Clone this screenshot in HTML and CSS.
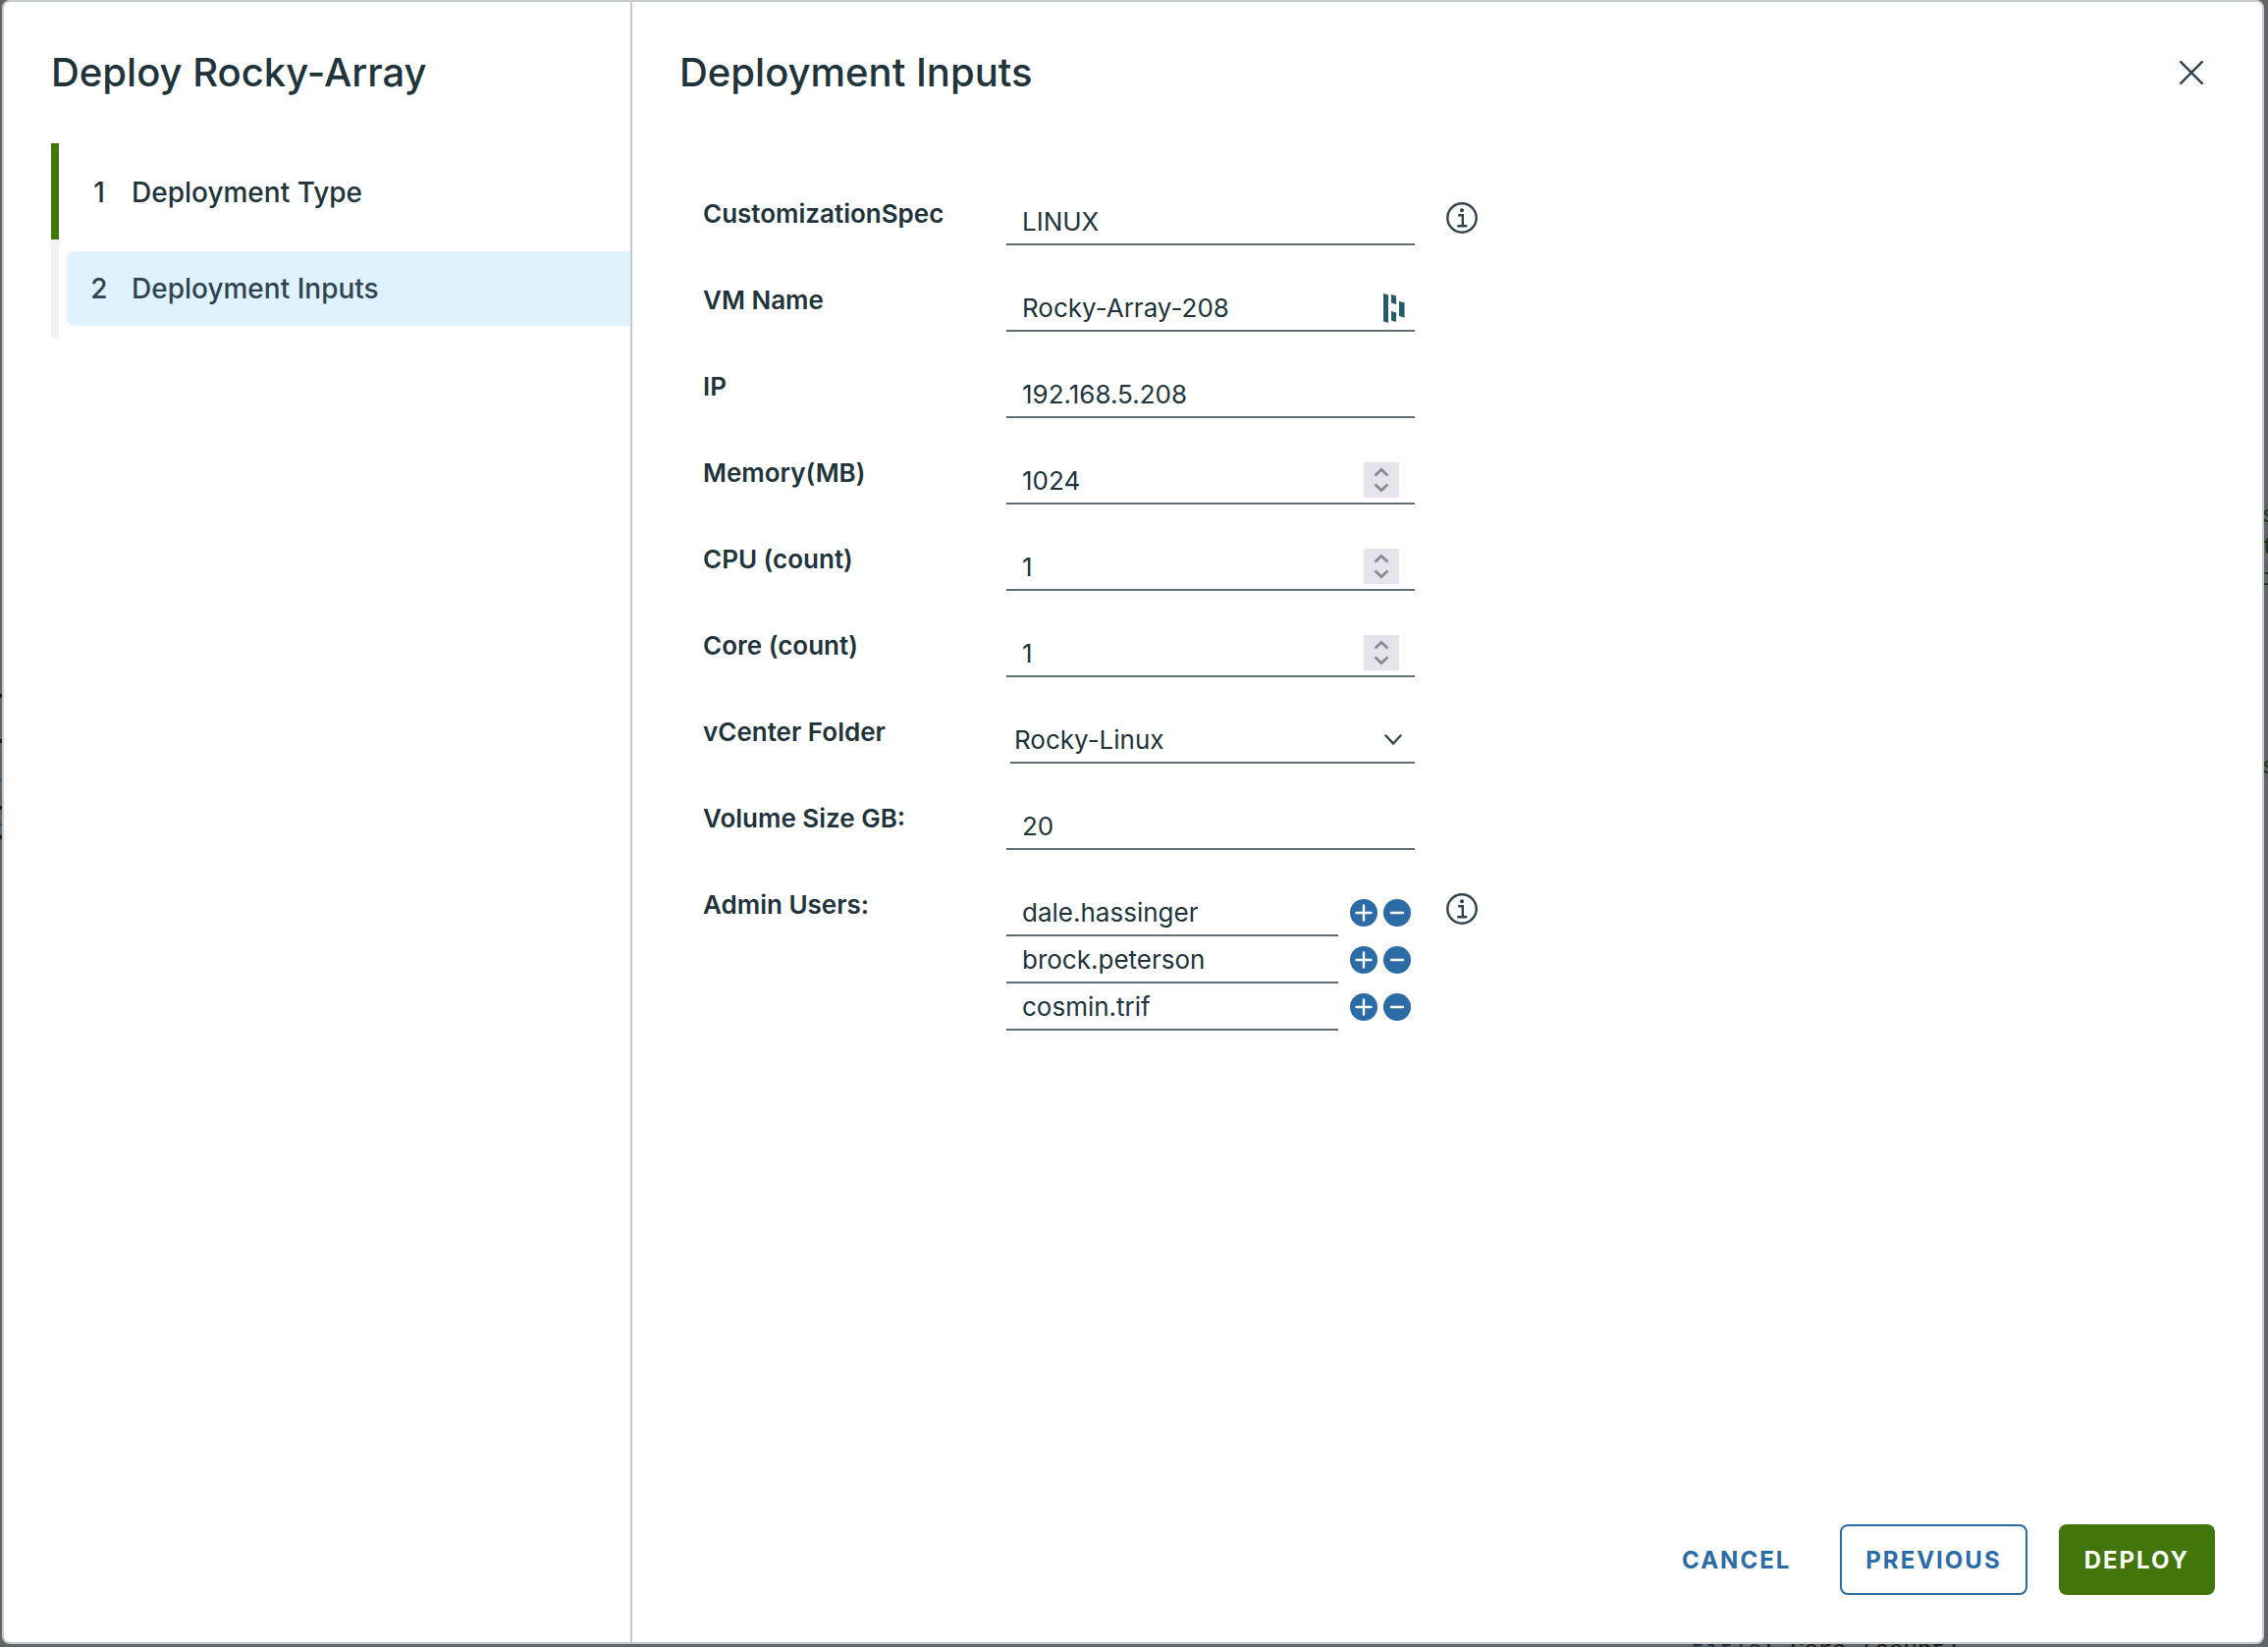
FILE: index.html
```
<!DOCTYPE html>
<html lang="en">
<head>
<meta charset="utf-8">
<title>Deploy Rocky-Array</title>
<link rel="stylesheet" href="styles.css">
</head>
<body>
<svg class="sprite" aria-hidden="true">
  <symbol id="info" viewBox="0 0 32 32">
    <circle cx="16" cy="16" r="14.7" fill="none" stroke="currentColor" stroke-width="2.4"/>
    <circle cx="16" cy="8.2" r="2" fill="currentColor"/>
    <path d="M12.2 13.2h4.6v11M11.2 24.3h10" fill="none" stroke="currentColor" stroke-width="2.4"/>
  </symbol>
  <symbol id="plus" viewBox="0 0 28 28">
    <circle cx="14" cy="14" r="14" fill="currentColor"/>
    <path d="M14 6.500v15M6.500 14h15" stroke="#fff" stroke-width="2.4" stroke-linecap="round"/>
  </symbol>
  <symbol id="minus" viewBox="0 0 28 28">
    <circle cx="14" cy="14" r="14" fill="currentColor"/>
    <path d="M8 14h12" stroke="#fff" stroke-width="2.4" stroke-linecap="round"/>
  </symbol>
  <symbol id="updown" viewBox="0 0 36 36">
    <path d="M11.500 13.500L18 7.500l6.500 6M11.500 22.500l6.500 6 6.500-6" fill="none" stroke="currentColor" stroke-width="2.8"/>
  </symbol>
</svg>
<div class="backdrop" aria-hidden="true">
  <svg class="backdrop-edge" width="2" height="150" viewBox="0 0 2 150">
    <path d="M0 2h2M0 48h2M0 116h2M0 146h2" stroke="#1b1d20" stroke-width="4"/>
    <path d="M0 88h2M0 133h2" stroke="#2a4f70" stroke-width="2"/>
  </svg>
  <pre class="code code-right">s
t
i





s</pre>
  <pre class="code code-bottom"><span class="key">title</span>: Core (count)</pre>
</div>
<main class="dialog" role="dialog" aria-labelledby="dialog-title">
  <aside class="sidebar">
    <h1 class="title" id="dialog-title">Deploy Rocky-Array</h1>
    <nav class="steps">
      <a class="step done" href="#type"><span class="step-body"><span class="num">1</span>Deployment Type</span></a>
      <a class="step current" href="#inputs" aria-current="step"><span class="step-body"><span class="num">2</span>Deployment Inputs</span></a>
    </nav>
  </aside>
  <section class="content">
    <header class="header">
      <h2 class="title">Deployment Inputs</h2>
      <button class="icon-button close" type="button" aria-label="Close"><svg width="24" height="24" viewBox="0 0 24 24"><path d="M1.200 1.200l21.600 21.600M22.800 1.200L1.200 22.800" stroke="currentColor" stroke-width="2.400" stroke-linecap="round"/></svg></button>
    </header>
    <form class="form">
      <div class="row">
        <label for="spec">CustomizationSpec</label>
        <div class="field"><input id="spec" type="text" value="LINUX"></div>
        <button class="icon-button info" type="button" aria-label="About CustomizationSpec"><svg width="32" height="32"><use href="#info"/></svg></button>
      </div>
      <div class="row">
        <label for="vm">VM Name</label>
        <div class="field"><input id="vm" type="text" value="Rocky-Array-208"><svg class="vault" width="22" height="30" viewBox="0 0 22 30"><path d="M0 0l5 1.500v28.500l-5-1.500zM8 1l5 1.500v8.500l-5-1.500zM8 18l5 1.500v9.500l-5-1.500zM16 8l5.500 1.500v15l-5.500-1.500z" fill="#255a6b"/></svg></div>
      </div>
      <div class="row">
        <label for="ip">IP</label>
        <div class="field"><input id="ip" type="text" value="192.168.5.208"></div>
      </div>
      <div class="row">
        <label for="memory">Memory(MB)</label>
        <div class="field"><input id="memory" type="number" value="1024"><button class="stepper" type="button" aria-label="Adjust memory"><svg width="36" height="36"><use href="#updown"/></svg></button></div>
      </div>
      <div class="row">
        <label for="cpu">CPU (count)</label>
        <div class="field"><input id="cpu" type="number" value="1"><button class="stepper" type="button" aria-label="Adjust CPU count"><svg width="36" height="36"><use href="#updown"/></svg></button></div>
      </div>
      <div class="row">
        <label for="core">Core (count)</label>
        <div class="field"><input id="core" type="number" value="1"><button class="stepper" type="button" aria-label="Adjust core count"><svg width="36" height="36"><use href="#updown"/></svg></button></div>
      </div>
      <div class="row">
        <label for="folder">vCenter Folder</label>
        <div class="field select">
          <select id="folder"><option>Rocky-Linux</option></select>
          <svg class="chevron" width="18" height="12" viewBox="0 0 18 12"><path d="M1.500 1.500L9 9.500l7.500-8" fill="none" stroke="currentColor" stroke-width="2.400" stroke-linecap="round"/></svg>
        </div>
      </div>
      <div class="row">
        <label for="volume">Volume Size GB:</label>
        <div class="field"><input id="volume" type="text" value="20"></div>
      </div>
      <div class="row">
        <label for="user1">Admin Users:</label>
        <div class="users">
          <div class="user">
            <div class="field"><input id="user1" type="text" value="dale.hassinger"></div>
            <button class="icon-button" type="button" aria-label="Add user"><svg width="28" height="28"><use href="#plus"/></svg></button>
            <button class="icon-button" type="button" aria-label="Remove user"><svg width="28" height="28"><use href="#minus"/></svg></button>
          </div>
          <div class="user">
            <div class="field"><input type="text" aria-label="Admin user 2" value="brock.peterson"></div>
            <button class="icon-button" type="button" aria-label="Add user"><svg width="28" height="28"><use href="#plus"/></svg></button>
            <button class="icon-button" type="button" aria-label="Remove user"><svg width="28" height="28"><use href="#minus"/></svg></button>
          </div>
          <div class="user">
            <div class="field"><input type="text" aria-label="Admin user 3" value="cosmin.trif"></div>
            <button class="icon-button" type="button" aria-label="Add user"><svg width="28" height="28"><use href="#plus"/></svg></button>
            <button class="icon-button" type="button" aria-label="Remove user"><svg width="28" height="28"><use href="#minus"/></svg></button>
          </div>
        </div>
        <button class="icon-button info" type="button" aria-label="About Admin Users"><svg width="32" height="32"><use href="#info"/></svg></button>
      </div>
    </form>
    <footer class="footer">
      <button class="btn link" type="button">CANCEL</button>
      <button class="btn outline" type="button">PREVIOUS</button>
      <button class="btn primary" type="button">DEPLOY</button>
    </footer>
  </section>
</main>
</body>
</html>
```

FILE: styles.css
```
* {
  box-sizing: border-box;
}

body {
  position: relative;
  margin: 0;
  min-height: 100vh;
  padding: 0 4px 3px 2px;
  display: flex;
  background: #636466;
  color: #21333b;
  font-family: Inter, "Open Sans", sans-serif;
  font-size: 26px;
}

.sprite {
  display: none;
}

/* Dimmed page behind the dialog */
.backdrop {
  position: absolute;
  inset: 0;
  overflow: hidden;
}

.backdrop-edge {
  position: absolute;
  left: 0;
  top: 707px;
}

.code {
  position: absolute;
  margin: 0;
  color: #15181b;
  font: 24px/32px "Liberation Mono", monospace;
}

.code-right {
  top: 510px;
  right: -8px;
  color: #1c2e12;
}

.code-bottom {
  bottom: -20px;
  right: 314px;
}

.key {
  color: #1a2740;
}

.dialog {
  position: relative;
  flex: 1;
  display: flex;
  background: #fff;
  border: 2px solid #c5cccf;
  border-radius: 8px;
}

.sidebar {
  width: 640px;
  flex: none;
  padding: 46px 0 0 48px;
  border-right: 2px solid #c5cccf;
}

.title {
  margin: 0;
  font-size: 40px;
  font-weight: 500;
  line-height: 52px;
}

.steps {
  margin-top: 46px;
}

.step {
  display: block;
  padding: 12px 0 12px 8px;
  border-left: 8px solid #eff3f6;
  color: #21333b;
  text-decoration: none;
  font-size: 28px;
  font-weight: 500;
}

.step.done {
  border-color: #42750a;
  padding-bottom: 10px;
}

.step-body {
  display: flex;
  align-items: center;
  height: 76px;
  border-radius: 8px 0 0 8px;
}

.current .step-body {
  background: #dff3ff;
  color: #314351;
}

.num {
  width: 66px;
  text-align: center;
}

.content {
  flex: 1;
  display: flex;
  flex-direction: column;
  padding: 46px 48px 48px;
}

.header {
  display: flex;
  justify-content: space-between;
  align-items: center;
  padding-right: 12px;
}

.icon-button,
.stepper {
  display: flex;
  padding: 0;
  border: 0;
  background: none;
  color: #2b6ca6;
}

.close,
.info {
  color: #314351;
}

.form {
  flex: 1;
  padding: 102px 24px 0;
}

.row {
  display: grid;
  grid-template-columns: 309px 416px auto;
  justify-content: start;
  align-items: start;
  min-height: 88px;
}

.row label {
  line-height: 32px;
  font-weight: 600;
}

.field {
  display: flex;
  align-items: center;
  height: 48px;
  border-bottom: 2px solid #606c76;
}

input,
select {
  flex: 1;
  min-width: 0;
  width: 100%;
  height: 44px;
  padding: 0 16px;
  border: 0;
  outline: 0;
  background: none;
  color: #21333b;
  font: inherit;
  appearance: none;
}

input[type="number"] {
  appearance: textfield;
}

.vault {
  margin: 2px 10px 0 0;
}

.stepper {
  margin-right: 16px;
  background: #e5e4ea;
  color: #8b8998;
}

.select {
  position: relative;
  margin-left: 4px;
}

.select select {
  padding: 0 4px;
}

.chevron {
  position: absolute;
  right: 13px;
  top: 18px;
  color: #314351;
  pointer-events: none;
}

.info {
  margin: 4px 0 0 32px;
}

.user {
  display: flex;
  align-items: center;
  gap: 6px;
}

.user .field {
  width: 338px;
  margin-right: 6px;
}

.footer {
  display: flex;
  justify-content: flex-end;
  gap: 32px;
}

.btn {
  height: 72px;
  padding: 0 24px;
  border: 2px solid transparent;
  border-radius: 8px;
  background: none;
  color: #2b6ca6;
  font: inherit;
  font-size: 24px;
  font-weight: 700;
  letter-spacing: 2px;
}

.link {
  padding: 0 16px;
}

.outline {
  border-color: #2b6ca6;
}

.primary {
  background: #42750a;
  color: #fff;
}
```
